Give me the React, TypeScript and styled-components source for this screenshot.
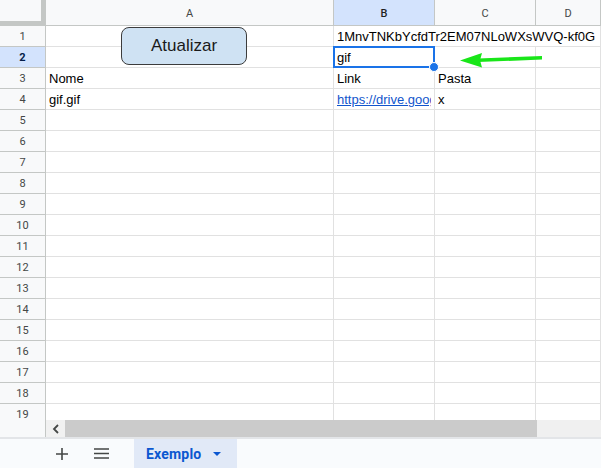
import React from "react";
import styled, { createGlobalStyle } from "styled-components";

const GlobalStyle = createGlobalStyle`
  html, body {
    margin: 0;
    padding: 0;
    background: #ffffff;
    font-family: "Liberation Sans", Arial, sans-serif;
  }
`;

const Page = styled.div`
  width: 601px;
  height: 468px;
  display: flex;
  flex-direction: column;
  overflow: hidden;
  background: #f9fbfd;
`;

const SheetArea = styled.div`
  position: relative;
  height: 420px;
  overflow: hidden;
  background: #ffffff;
`;

const Grid = styled.div`
  display: grid;
  grid-template-columns: 46px 288px 101px 101px 1fr;
  grid-template-rows: 26px;
  grid-auto-rows: 21px;
`;

type HeadProps = { $active?: boolean };

const Corner = styled.div`
  background: #f8f9fa;
  border-right: 1px solid #c4c7c5;
  border-bottom: 1px solid #c4c7c5;
  box-shadow: inset -4px -4px 0 #c4c7c5;
`;

const ColHead = styled.div<HeadProps>`
  display: flex;
  align-items: center;
  justify-content: center;
  background: ${p => (p.$active ? "#d3e3fd" : "#f8f9fa")};
  color: ${p => (p.$active ? "#1f1f1f" : "#444746")};
  font-family: Roboto, "Liberation Sans", sans-serif;
  font-size: 11px;
  font-weight: ${p => (p.$active ? 500 : 400)};
  border-right: 1px solid #c4c7c5;
  border-bottom: 1px solid #c4c7c5;
  padding-top: 2px;
  box-sizing: border-box;
`;

const RowHead = styled.div<HeadProps>`
  display: flex;
  align-items: center;
  justify-content: center;
  background: ${p => (p.$active ? "#d3e3fd" : "#f8f9fa")};
  color: ${p => (p.$active ? "#041e49" : "#444746")};
  font-family: Roboto, "Liberation Sans", sans-serif;
  font-size: 11px;
  font-weight: ${p => (p.$active ? 700 : 400)};
  border-right: 1px solid #c4c7c5;
  border-bottom: 1px solid #c4c7c5;
`;

type CellProps = { $span?: number; $overflow?: boolean };

const Cell = styled.div<CellProps>`
  grid-column: span ${p => p.$span || 1};
  display: flex;
  align-items: flex-end;
  padding: 0 3px 2px 3px;
  box-sizing: border-box;
  font-size: 13px;
  color: #000000;
  white-space: nowrap;
  overflow: ${p => (p.$overflow ? "visible" : "hidden")};
  border-right: 1px solid #e1e1e1;
  border-bottom: 1px solid #e1e1e1;
`;

const LinkText = styled.span`
  display: inline-block;
  max-width: 100%;
  overflow: hidden;
  color: #1155cc;
  text-decoration: underline;
`;

const UpdateButton = styled.button`
  position: absolute;
  left: 121px;
  top: 27px;
  width: 126px;
  height: 38px;
  background: #cfe2f3;
  border: 1px solid #3c3c3c;
  border-radius: 8px;
  font-family: "Liberation Sans", Arial, sans-serif;
  font-size: 17px;
  color: #1a1a1a;
  padding: 0;
`;

const Selection = styled.div`
  position: absolute;
  left: 333px;
  top: 46px;
  width: 102px;
  height: 22px;
  box-sizing: border-box;
  border: 2px solid #1a73e8;
  pointer-events: none;
`;

const FillHandle = styled.div`
  position: absolute;
  left: 429px;
  top: 62px;
  width: 10px;
  height: 10px;
  box-sizing: border-box;
  border-radius: 50%;
  background: #1a73e8;
  border: 1px solid #ffffff;
`;

const Arrow = styled.svg`
  position: absolute;
  left: 456px;
  top: 50px;
`;

const ScrollBar = styled.div`
  height: 17px;
  display: flex;
  background: #f8f9fa;
`;

const ScrollGutter = styled.div`
  width: 45px;
  border-right: 1px solid #c4c7c5;
`;

const ScrollButton = styled.div`
  width: 19px;
  display: flex;
  align-items: center;
  justify-content: center;
  background: #f1f1f1;
`;

const ScrollThumb = styled.div`
  width: 472px;
  background: #cbcbcb;
`;

const ScrollTrack = styled.div`
  flex: 1;
  background: #f0f0f0;
`;

const Divider = styled.div`
  height: 2px;
  background: #e3e5e8;
`;

const TabBar = styled.div`
  flex: 1;
  display: flex;
  align-items: stretch;
  background: #f9fbfd;
`;

const TabIcon = styled.div<{ $left: number }>`
  width: 20px;
  margin-left: ${p => p.$left}px;
  display: flex;
  align-items: center;
  justify-content: center;
`;

const SheetTab = styled.div`
  margin-left: 23px;
  width: 103px;
  display: flex;
  align-items: center;
  padding-left: 12px;
  box-sizing: border-box;
  background: #e1e9f7;
  color: #0b57d0;
  font-family: Roboto, "Liberation Sans", sans-serif;
  font-weight: 700;
  font-size: 14px;
  letter-spacing: 0.2px;
`;

const Caret = styled.span`
  margin-left: 12px;
  width: 0;
  height: 0;
  border-left: 4px solid transparent;
  border-right: 4px solid transparent;
  border-top: 4px solid #0b57d0;
`;

type RowData = [string, React.ReactNode, string];

const rows: RowData[] = [
  ["", "", ""],
  ["", "gif", ""],
  ["Nome", "Link", "Pasta"],
  ["gif.gif", <LinkText>https://drive.google.com/file/d/1</LinkText>, "x"]
];

const App: React.FC = () => {
  const rowNumbers = Array.from({ length: 19 }, (_, i) => i + 1);

  return (
    <>
      <GlobalStyle />
      <Page>
        <SheetArea>
          <Grid>
            <Corner />
            <ColHead>A</ColHead>
            <ColHead $active>B</ColHead>
            <ColHead>C</ColHead>
            <ColHead>D</ColHead>
            {rowNumbers.map(n => {
              const data = rows[n - 1];
              if (n === 1) {
                return (
                  <React.Fragment key={n}>
                    <RowHead>{n}</RowHead>
                    <Cell />
                    <Cell $span={3} $overflow>
                      1MnvTNKbYcfdTr2EM07NLoWXsWVQ-kf0G
                    </Cell>
                  </React.Fragment>
                );
              }
              return (
                <React.Fragment key={n}>
                  <RowHead $active={n === 2}>{n}</RowHead>
                  <Cell>{data ? data[0] : ""}</Cell>
                  <Cell>{data ? data[1] : ""}</Cell>
                  <Cell>{data ? data[2] : ""}</Cell>
                  <Cell />
                </React.Fragment>
              );
            })}
          </Grid>
          <UpdateButton>Atualizar</UpdateButton>
          <Selection />
          <FillHandle />
          <Arrow width="90" height="20" viewBox="0 0 90 20">
            <path d="M22 8.4 L86 6 L86 9.6 L22 12 Z" fill="#19e619" />
            <path d="M4 10.5 L26 3 L24 10.2 L26 17.5 Z" fill="#19e619" />
          </Arrow>
        </SheetArea>
        <ScrollBar>
          <ScrollGutter />
          <ScrollButton>
            <svg width="8" height="10" viewBox="0 0 8 10">
              <path d="M6 1 L2 5 L6 9" stroke="#444746" strokeWidth="1.8" fill="none" />
            </svg>
          </ScrollButton>
          <ScrollThumb />
          <ScrollTrack />
        </ScrollBar>
        <Divider />
        <TabBar>
          <TabIcon $left={52}>
            <svg width="12" height="12" viewBox="0 0 12 12">
              <path d="M6 0 V12 M0 6 H12" stroke="#444746" strokeWidth="1.6" />
            </svg>
          </TabIcon>
          <TabIcon $left={19}>
            <svg width="15" height="11" viewBox="0 0 15 11">
              <path d="M0 1 H15 M0 5.5 H15 M0 10 H15" stroke="#444746" strokeWidth="1.6" />
            </svg>
          </TabIcon>
          <SheetTab>
            Exemplo
            <Caret />
          </SheetTab>
        </TabBar>
      </Page>
    </>
  );
};

export default App;
